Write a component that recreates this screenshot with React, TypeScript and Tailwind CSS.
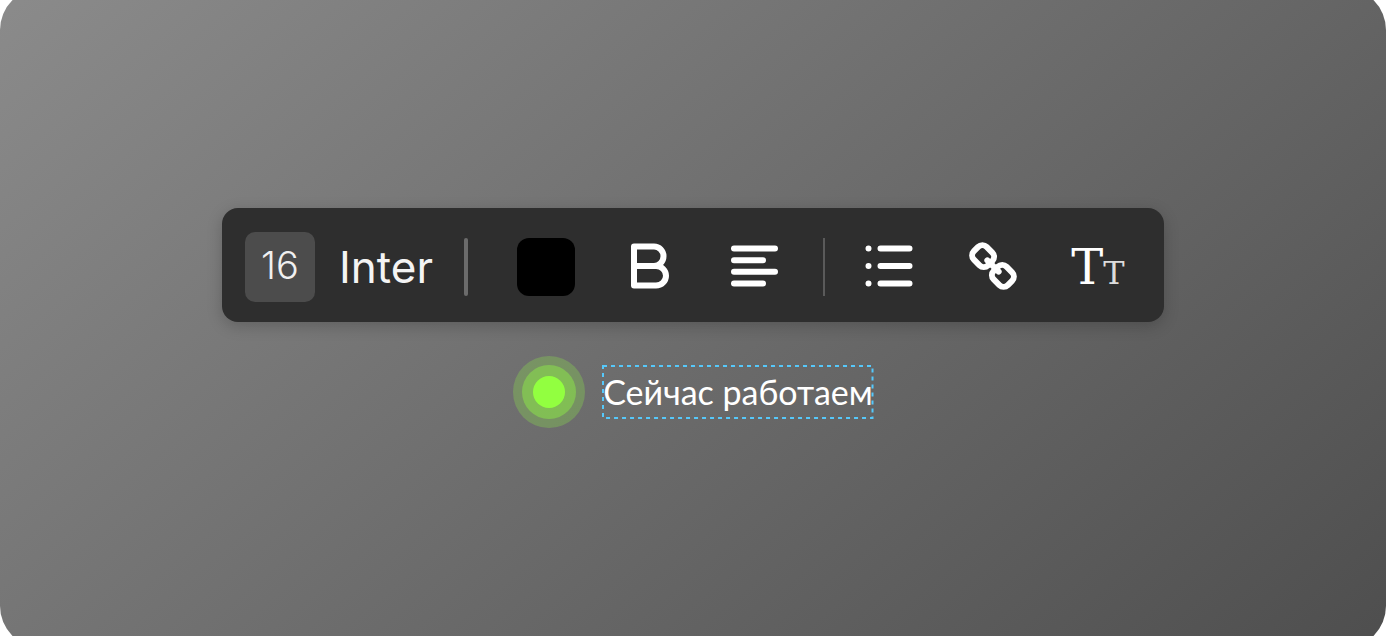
import React, { useState } from 'react';

type IconProps = { className?: string };

const BoldIcon: React.FC<IconProps> = ({ className }) => (
  <svg viewBox="0 0 58 58" className={className} fill="none" stroke="currentColor" strokeWidth="6" strokeLinejoin="round" aria-hidden="true">
    <path d="M13 8.500h20a9.500 9.700 0 0 1 0 19.400H13zM13 27.900h22a10 9.800 0 0 1 0 19.600H13z" />
  </svg>
);

const AlignLeftIcon: React.FC<IconProps> = ({ className }) => (
  <svg viewBox="0 0 58 58" className={className} fill="none" stroke="currentColor" strokeWidth="6" strokeLinecap="round" aria-hidden="true">
    <path d="M9 10.500h41M9 22.200h29M9 33.800h41M9 45.500h29" />
  </svg>
);

const ListIcon: React.FC<IconProps> = ({ className }) => (
  <svg viewBox="0 0 58 58" className={className} fill="none" stroke="currentColor" strokeWidth="6" strokeLinecap="round" aria-hidden="true">
    <path d="M8.500 10.500h.01M8.500 28h.01M8.500 45.500h.01M20.500 10.500h29M20.500 28h29M20.500 45.500h29" />
  </svg>
);

const LinkIcon: React.FC<IconProps> = ({ className }) => (
  <svg viewBox="0 0 58 58" className={className} fill="none" stroke="currentColor" strokeWidth="6" strokeLinecap="round" aria-hidden="true">
    <g transform="rotate(45 29 28)">
      <rect x="5" y="19" width="20" height="18" rx="6" />
      <rect x="33" y="19" width="20" height="18" rx="6" />
      <path d="M21 28h16" />
    </g>
  </svg>
);

const tools = [
  { name: 'Bold', Icon: BoldIcon },
  { name: 'Align left', Icon: AlignLeftIcon },
];

export default function App() {
  const [size, setSize] = useState('16');

  return (
    <div className="flex h-screen overflow-hidden bg-white">
      <main className="-my-3 flex flex-1 flex-col items-center justify-center gap-[34px] rounded-[42px] bg-linear-[140deg,#8b8b8b,#4e4e4e]">
        {/* Toolbar */}
        <div
          role="toolbar"
          aria-label="Text formatting"
          className="flex items-center rounded-2xl bg-[#2e2e2e] pt-6 pr-9 pb-5 pl-[23px] text-white shadow-[0_4px_16px_rgba(0,0,0,0.2)]"
        >
          <input
            aria-label="Font size"
            value={size}
            onChange={e => setSize(e.target.value)}
            className="size-[70px] rounded-[10px] bg-[#4c4c4c] pb-1 text-center font-[Inter,sans-serif] text-[38px] font-light text-[#f0f0f0] outline-none"
          />
          <button type="button" className="ml-6 font-[Inter,sans-serif] text-[44px] leading-[48px] font-normal text-[#f4f4f4]">
            Inter
          </button>
          <span className="ml-[31px] h-[58px] w-1 rounded-xs bg-[#6b6b6b]" />
          <div className="ml-[49px] flex gap-[46px]">
            <button type="button" aria-label="Text color" className="size-[58px] rounded-xl bg-black" />
            {tools.map(({ name, Icon }) => (
              <button key={name} type="button" aria-label={name}>
                <Icon className="size-[58px]" />
              </button>
            ))}
          </div>
          <span className="ml-10 h-[58px] w-[2px] bg-[#5a5a5a]" />
          <div className="ml-[35px] flex gap-[46px]">
            <button type="button" aria-label="Bulleted list">
              <ListIcon className="size-[58px]" />
            </button>
            <button type="button" aria-label="Link">
              <LinkIcon className="size-[58px]" />
            </button>
            <button
              type="button"
              aria-label="Text case"
              className="h-[58px] w-[60px] text-center font-['DejaVu_Serif',serif] text-[48px] leading-[58px] whitespace-nowrap"
            >
              T<span className="text-[32px] text-[#dcdcdc]">T</span>
            </button>
          </div>
        </div>

        {/* Status line */}
        <div className="flex items-center gap-[18px]">
          <span className="flex size-[72px] items-center justify-center rounded-full bg-[#92ff40]/25">
            <span className="flex size-[54px] items-center justify-center rounded-full bg-[#92ff40]/40">
              <span className="size-8 rounded-full bg-[#92ff40]" />
            </span>
          </span>
          <div className="relative font-[Lato,'Open_Sans',sans-serif] text-[34px] leading-[52px] text-white">
            <svg className="absolute inset-0 size-full overflow-visible" fill="none" aria-hidden="true">
              <rect width="100%" height="100%" stroke="#56c8fa" strokeWidth="2" strokeDasharray="4 4" />
            </svg>
            <p>Сейчас работаем</p>
          </div>
        </div>
      </main>
    </div>
  );
}
